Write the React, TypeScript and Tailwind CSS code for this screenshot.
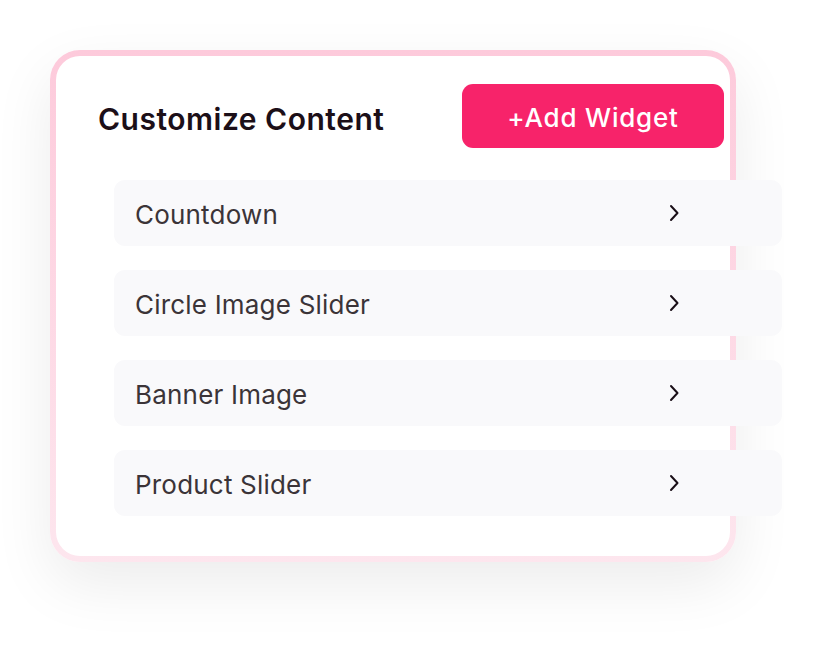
import React from 'react';

const widgets = ["Countdown", "Circle Image Slider", "Banner Image", "Product Slider"];

function Chevron() {
  return (
    <svg width="12" height="18" viewBox="0 0 12 18" fill="none">
      <polyline points="3,2 9.5,9 3,16" stroke="#1a0f17" strokeWidth="2" strokeLinecap="round" strokeLinejoin="round" />
    </svg>
  );
}

export default function App() {
  return (
    <div className="w-[818px] h-[646px] bg-white pl-[50px] pt-[50px]" style={{ fontFamily: 'Inter, "Noto Sans", sans-serif' }}>
      {/* --- CARD --- */}
      <div className="w-[686px] h-[512px] rounded-[30px] p-[6px] bg-gradient-to-b from-[#fdcadb] to-[#fde6ee] shadow-[0_22px_60px_rgba(0,0,0,0.08)]">
        <div className="h-full bg-white rounded-[24px] pt-[28px] pr-[6px]">
          <div className="flex items-center justify-between pl-[42px]">
            <h2 className="pt-[6px] text-[30px] font-semibold text-[#1c0f18] tracking-[0.5px]">Customize Content</h2>
            <button className="w-[262px] h-[64px] rounded-[11px] bg-[#f7236a] text-white text-[26px] font-medium tracking-[0.8px] pt-[3px]">
              +Add Widget
            </button>
          </div>

          <div className="mt-[32px] ml-[58px] w-[668px] flex flex-col gap-[24px]">
            {widgets.map((w) => (
              <div key={w} className="h-[66px] rounded-[11px] bg-[#f9f9fb] flex items-center justify-between pl-[21px] pr-[102px]">
                <span className="pt-[2px] text-[26px] text-[#3b3438] tracking-[0.2px]">{w}</span>
                <Chevron />
              </div>
            ))}
          </div>
        </div>
      </div>
    </div>
  );
}
